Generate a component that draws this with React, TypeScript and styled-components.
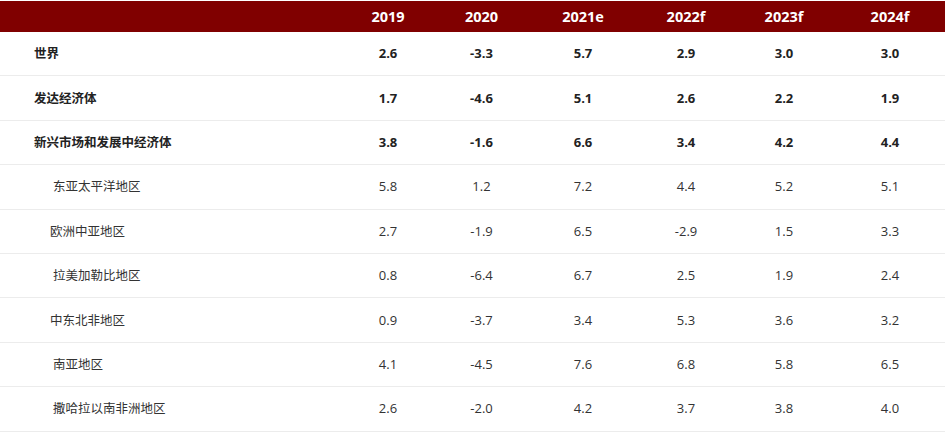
import React from "react";
import styled, { createGlobalStyle } from "styled-components";

const Global = createGlobalStyle`
  html, body { margin: 0; padding: 0; background: #fff; }
  body { font-family: "Open Sans", "Noto Sans CJK SC", sans-serif; color: #333; }
`;

const COLS = "340px 96px 91px 112px 94px 102px 110px";

const Wrapper = styled.div`
  width: 945px;
  padding-top: 1px;
`;

const HeaderRow = styled.div`
  display: grid;
  grid-template-columns: ${COLS};
  height: 31px;
  background: #800000;
  align-items: center;
`;

const HeadCell = styled.div`
  text-align: center;
  color: #fff;
  font-weight: 700;
  font-size: 14.5px;
`;

const Row = styled.div`
  display: grid;
  grid-template-columns: ${COLS};
  height: 44.4px;
  box-sizing: border-box;
  border-bottom: 1px solid #ececec;
  align-items: center;
  padding-bottom: 1px;
`;

const Label = styled.div<{ $indent: number; $bold: boolean }>`
  padding-left: ${(p) => p.$indent}px;
  font-family: "Noto Sans CJK SC", "Open Sans", sans-serif;
  font-size: 12.5px;
  line-height: 18px;
  font-weight: ${(p) => (p.$bold ? 700 : 400)};
  color: ${(p) => (p.$bold ? "#222" : "#333")};
  white-space: nowrap;
`;

const Value = styled.div<{ $bold: boolean }>`
  text-align: center;
  font-size: 13px;
  line-height: 18px;
  font-weight: ${(p) => (p.$bold ? 700 : 400)};
  color: ${(p) => (p.$bold ? "#222" : "#333")};
`;

const years = ["2019", "2020", "2021e", "2022f", "2023f", "2024f"];

type RowData = { label: string; indent: number; bold: boolean; values: string[] };

const rows: RowData[] = [
  { label: "世界", indent: 34, bold: true, values: ["2.6", "-3.3", "5.7", "2.9", "3.0", "3.0"] },
  { label: "发达经济体", indent: 34, bold: true, values: ["1.7", "-4.6", "5.1", "2.6", "2.2", "1.9"] },
  { label: "新兴市场和发展中经济体", indent: 34, bold: true, values: ["3.8", "-1.6", "6.6", "3.4", "4.2", "4.4"] },
  { label: "东亚太平洋地区", indent: 53, bold: false, values: ["5.8", "1.2", "7.2", "4.4", "5.2", "5.1"] },
  { label: "欧洲中亚地区", indent: 50, bold: false, values: ["2.7", "-1.9", "6.5", "-2.9", "1.5", "3.3"] },
  { label: "拉美加勒比地区", indent: 53, bold: false, values: ["0.8", "-6.4", "6.7", "2.5", "1.9", "2.4"] },
  { label: "中东北非地区", indent: 50, bold: false, values: ["0.9", "-3.7", "3.4", "5.3", "3.6", "3.2"] },
  { label: "南亚地区", indent: 53, bold: false, values: ["4.1", "-4.5", "7.6", "6.8", "5.8", "6.5"] },
  { label: "撒哈拉以南非洲地区", indent: 53, bold: false, values: ["2.6", "-2.0", "4.2", "3.7", "3.8", "4.0"] },
];

export default function App() {
  return (
    <Wrapper>
      <Global />
      <HeaderRow>
        <HeadCell />
        {years.map((y) => (
          <HeadCell key={y}>{y}</HeadCell>
        ))}
      </HeaderRow>
      {rows.map((r) => (
        <Row key={r.label}>
          <Label $indent={r.indent} $bold={r.bold}>{r.label}</Label>
          {r.values.map((v, i) => (
            <Value key={i} $bold={r.bold}>{v}</Value>
          ))}
        </Row>
      ))}
    </Wrapper>
  );
}
